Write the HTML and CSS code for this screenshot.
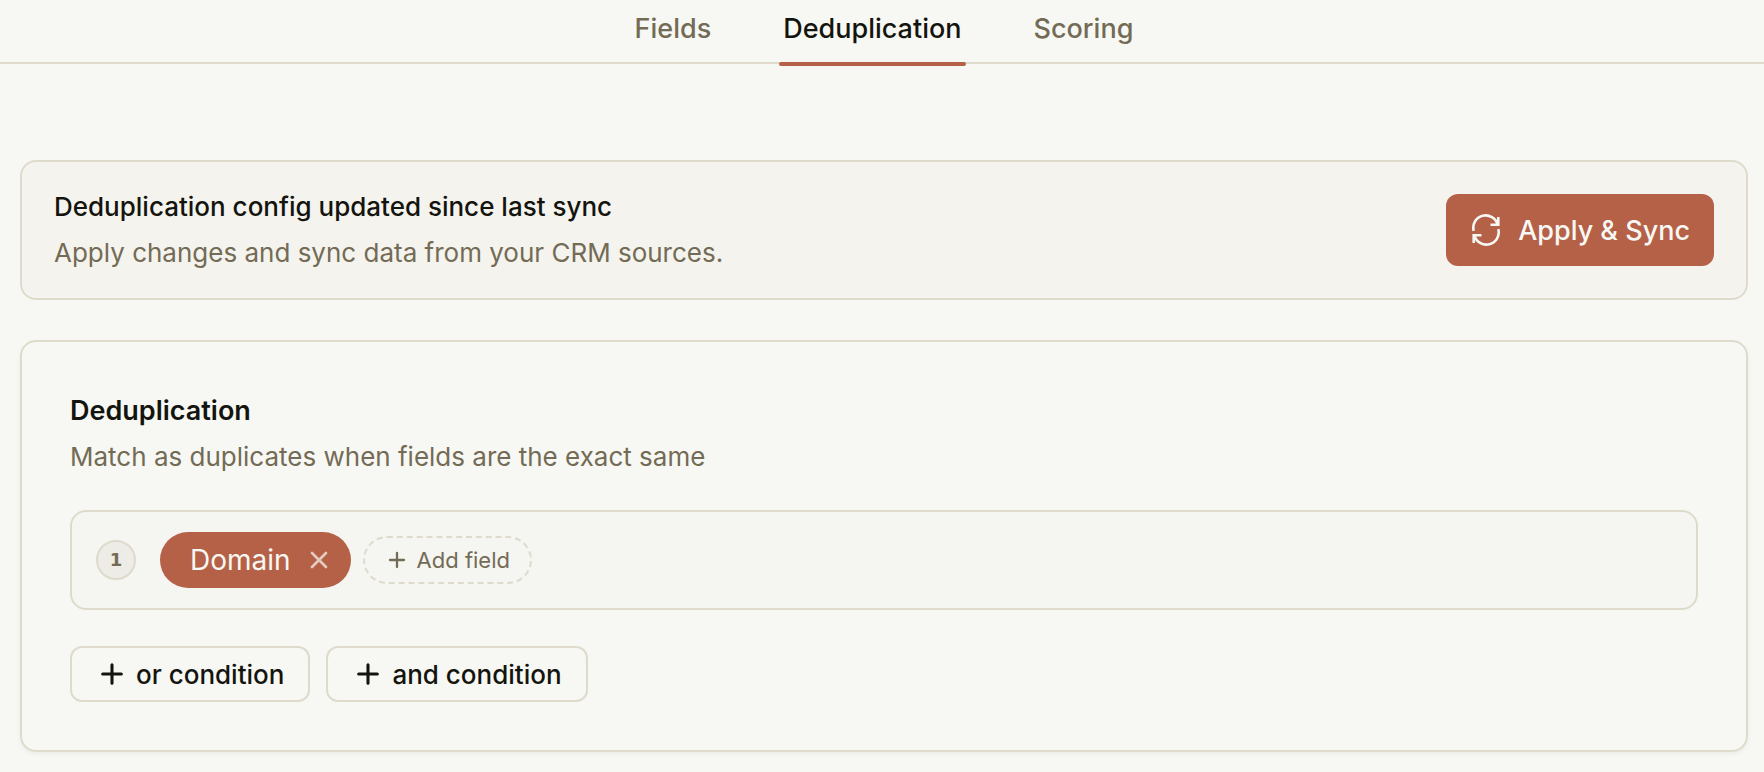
FILE: index.html
```html
<!DOCTYPE html>
<html lang="en">
<head>
<meta charset="UTF-8">
<meta name="viewport" content="width=device-width, initial-scale=1.0">
<title>Deduplication</title>
<link rel="stylesheet" href="styles.css">
</head>
<body>
    <nav class="tabs">
        <a class="tab" href="#fields">Fields</a>
        <a class="tab active" href="#deduplication" aria-current="page">Deduplication</a>
        <a class="tab" href="#scoring">Scoring</a>
    </nav>

    <main>
        <!-- Sync banner -->
        <section class="banner">
            <div>
                <p class="banner-title">Deduplication config updated since last sync</p>
                <p class="subtitle">Apply changes and sync data from your CRM sources.</p>
            </div>
            <button type="button" class="apply">
                <svg class="icon-sync" viewBox="0 0 32 32" aria-hidden="true">
                    <path d="M3.7 16.8A12.2 12.2 0 0 1 27.6 10.6M28.3 3V10.7H20.5M28.3 15.2A12.2 12.2 0 0 1 4.4 21.4M3.7 29V21.3H11.5"/>
                </svg>
                Apply &amp; Sync
            </button>
        </section>

        <!-- Match rules -->
        <section class="card">
            <h2>Deduplication</h2>
            <p class="subtitle">Match as duplicates when fields are the exact same</p>

            <div class="rule">
                <span class="rule-number">1</span>
                <div class="rule-fields">
                    <span class="chip">
                        Domain
                        <button type="button" class="chip-remove" aria-label="Remove Domain">
                            <svg viewBox="0 0 24 24" aria-hidden="true"><path d="M18 6L6 18M6 6l12 12"/></svg>
                        </button>
                    </span>
                    <button type="button" class="add-field">
                        <svg viewBox="0 0 24 24" aria-hidden="true"><path d="M5 12h14M12 5v14"/></svg>
                        Add field
                    </button>
                </div>
            </div>

            <div class="conditions">
                <button type="button" class="condition">
                    <svg viewBox="0 0 24 24" aria-hidden="true"><path d="M5 12h14M12 5v14"/></svg>
                    or condition
                </button>
                <button type="button" class="condition">
                    <svg viewBox="0 0 24 24" aria-hidden="true"><path d="M5 12h14M12 5v14"/></svg>
                    and condition
                </button>
            </div>
        </section>
    </main>
</body>
</html>
```
FILE: styles.css
```css
* {
    box-sizing: border-box;
}
body {
    margin: 0;
    background-color: #f7f8f3;
    color: #14140f;
    font-family: Inter, "Liberation Sans", sans-serif;
    font-size: 27px;
    line-height: 42px;
}
h2, p {
    margin: 0;
}
button {
    display: flex;
    align-items: center;
    margin: 0;
    border: none;
    background: none;
    color: inherit;
    font-family: inherit;
    font-size: inherit;
    cursor: pointer;
}
svg {
    flex: none;
    fill: none;
    stroke: currentColor;
    stroke-width: 2.3;
    stroke-linecap: round;
    stroke-linejoin: round;
}

/* Tabs */
.tabs {
    display: flex;
    justify-content: center;
    gap: 72px;
    height: 64px;
    padding: 8px 16px 0 20px;
    border-bottom: 2px solid #dedbcd;
}
.tab {
    position: relative;
    color: #736b55;
    font-weight: 500;
    text-decoration: none;
}
.tab.active {
    color: #14140f;
}
.tab.active::after {
    content: "";
    position: absolute;
    left: -4px;
    right: -4px;
    bottom: -4px;
    height: 4px;
    border-radius: 2px;
    background-color: #b56147;
}
main {
    padding: 96px 16px 20px 20px;
}
.subtitle {
    margin-top: 4px;
    color: #736b55;
    font-size: 26px;
}

/* Banner */
.banner {
    display: flex;
    align-items: center;
    justify-content: space-between;
    gap: 24px;
    margin-bottom: 40px;
    padding: 24px 32px;
    border: 2px solid #dedbcd;
    border-radius: 16px;
    background-color: #f4f3ee;
}
.banner-title {
    font-size: 26px;
    font-weight: 500;
}
.apply {
    gap: 16px;
    height: 72px;
    padding: 0 24px;
    border-radius: 12px;
    background-color: #b56147;
    color: #f7f8f3;
    font-weight: 500;
    white-space: nowrap;
}
.icon-sync {
    width: 32px;
    height: 32px;
    stroke-width: 2.6;
    stroke-linecap: butt;
    stroke-linejoin: miter;
}

/* Card */
.card {
    padding: 48px;
    border: 2px solid #dedbcd;
    border-radius: 16px;
    box-shadow: 0 2px 4px rgba(0, 0, 0, 0.05);
}
h2 {
    font-size: 27px;
    font-weight: 600;
}
.rule {
    display: flex;
    align-items: center;
    gap: 24px;
    margin-top: 32px;
    padding: 20px 24px;
    border: 2px solid #dedbcd;
    border-radius: 16px;
    background-color: #f5f5f1;
}
.rule-number {
    display: flex;
    align-items: center;
    justify-content: center;
    width: 40px;
    height: 40px;
    border: 2px solid #dedbcd;
    border-radius: 50%;
    background-color: #edece7;
    color: #736b55;
    font-family: "DejaVu Sans", sans-serif;
    font-size: 18px;
    font-weight: 700;
}
.rule-fields {
    display: flex;
    align-items: center;
    flex-wrap: wrap;
    gap: 12px;
}
.chip {
    display: flex;
    align-items: center;
    gap: 14px;
    height: 56px;
    padding: 0 18px 0 30px;
    border-radius: 28px;
    background-color: #b56147;
    color: #f7f8f3;
    font-size: 28px;
}
.chip-remove {
    padding: 0;
    opacity: 0.7;
}
.chip-remove svg {
    width: 28px;
    height: 28px;
}
.add-field {
    gap: 8px;
    height: 48px;
    padding: 0 20px;
    border: 2px dashed #dedbcd;
    border-radius: 24px;
    color: #736b55;
    font-size: 22px;
}
.add-field svg {
    width: 24px;
    height: 24px;
}
.conditions {
    display: flex;
    flex-wrap: wrap;
    gap: 16px;
    margin-top: 36px;
}
.condition {
    gap: 8px;
    height: 56px;
    padding: 0 24px;
    border: 2px solid #dedbcd;
    border-radius: 12px;
    font-size: 26px;
    font-weight: 500;
}
.condition svg {
    width: 32px;
    height: 32px;
}
```
